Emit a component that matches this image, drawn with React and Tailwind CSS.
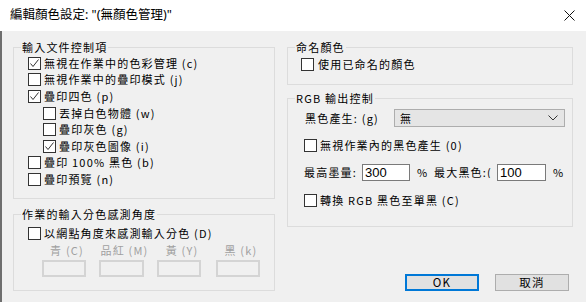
import React from "react";

function Box({ checked }) {
  return (
    <span className="w-[13px] h-[13px] shrink-0 border border-[#333333] bg-white flex items-center justify-center">
      {checked && (
        <svg width="11" height="11" viewBox="0 0 11 11">
          <polyline points="1.5,5.5 4,8.5 9.5,1.5" fill="none" stroke="#333333" strokeWidth="1" />
        </svg>
      )}
    </span>
  );
}

function CB({ checked, label, indent }) {
  return (
    <div className={indent ? "flex items-center h-[16.6px] pl-[15px]" : "flex items-center h-[16.6px]"}>
      <Box checked={checked} />
      <span className="ml-[3px] whitespace-nowrap">{label}</span>
    </div>
  );
}

function Group({ title, className, children }) {
  return (
    <div className={"relative border border-[#dcdcdc] " + className}>
      <span className="absolute left-[7px] top-[-9px] bg-[#f0f0f0] px-[1px] leading-[16px] whitespace-nowrap">
        {title}
      </span>
      {children}
    </div>
  );
}

export default function App() {
  return (
    <div className="w-[586px] h-[302px] flex flex-col font-['Noto_Sans_CJK_TC','Noto_Sans',sans-serif] text-black overflow-hidden">
      <div className="h-[31px] shrink-0 bg-white flex items-center justify-between pl-[10px] pr-[11px]">
        <span className="text-[12.5px] leading-none whitespace-nowrap font-['Noto_Sans','Noto_Sans_CJK_TC',sans-serif]">編輯顏色設定: "(無顏色管理)"</span>
        <svg width="11" height="11" viewBox="0 0 11 11">
          <path d="M0.5 0.5 L10.5 10.5 M10.5 0.5 L0.5 10.5" stroke="#111111" strokeWidth="1" />
        </svg>
      </div>
      <div className="flex-1 bg-[#f0f0f0] border-l-2 border-b-2 border-[#6e6e6e] flex gap-[12px] pl-[11px] pr-[12px] pt-[16px] pb-[11px] text-[11px] tracking-[1.2px] leading-none">
        <div className="w-[262px] flex flex-col">
          <Group title="輸入文件控制項" className="h-[152px] pt-[7px] pl-[14px]">
            <CB checked label="無視在作業中的色彩管理 (c)" />
            <CB label="無視作業中的疊印模式 (j)" />
            <CB checked label="疊印四色 (p)" />
            <CB indent label="丟掉白色物體 (w)" />
            <CB indent label="疊印灰色 (g)" />
            <CB indent checked label="疊印灰色圖像 (i)" />
            <CB label="疊印 100% 黑色 (b)" />
            <CB label="疊印預覽 (n)" />
          </Group>
          <Group title="作業的輸入分色感測角度" className="mt-[15px] h-[77px] pt-[10px] pl-[14px]">
            <div className="flex items-center h-[17px]">
              <Box />
              <span className="ml-[3px] whitespace-nowrap">以網點角度來感測輸入分色 (D)</span>
            </div>
            <div className="flex ml-[14px] mt-[1px] text-[#a0a0a0]">
              {[
                ["青 (C)", "w-[44px]"],
                ["品紅 (M)", "w-[45px] ml-[13px]"],
                ["黃 (Y)", "w-[44px] ml-[13px]"],
                ["黑 (k)", "w-[44px] ml-[15px]"],
              ].map(([t, c]) => (
                <div key={t} className={"flex flex-col items-center " + c}>
                  <span className="h-[14px] flex items-center whitespace-nowrap pl-[6px]">{t}</span>
                  <div className="mt-[3px] w-full h-[17px] border-2 border-[#d4d4d4] bg-[#f0f0f0]" />
                </div>
              ))}
            </div>
          </Group>
        </div>
        <div className="w-[286px] flex flex-col">
          <Group title="命名顏色" className="h-[38px] pt-[10px] pl-[13px]">
            <div className="flex items-center h-[13px]">
              <Box />
              <span className="ml-[4px] whitespace-nowrap">使用已命名的顏色</span>
            </div>
          </Group>
          <Group title="RGB 輸出控制" className="mt-[13px] h-[129px] pt-[10px] pl-[16px]">
            <div className="flex items-center h-[18px]">
              <span className="w-[90px] pl-[1px] whitespace-nowrap">黑色產生: (g)</span>
              <div className="w-[171px] h-[18px] bg-[#e5e5e5] border border-[#adadad] flex items-center justify-between pl-[5px] pr-[6px]">
                <span>無</span>
                <svg width="10" height="6" viewBox="0 0 10 6">
                  <polyline points="0.5,0.5 5,5 9.5,0.5" fill="none" stroke="#333333" strokeWidth="1" />
                </svg>
              </div>
            </div>
            <div className="flex items-center h-[13px] mt-[12px]">
              <Box />
              <span className="ml-[3px] whitespace-nowrap">無視作業內的黑色產生 (0)</span>
            </div>
            <div className="flex items-center h-[17px] mt-[12px]">
              <span className="w-[58px] whitespace-nowrap">最高墨量:</span>
              <div className="w-[48px] h-[17px] bg-white border border-[#7a7a7a] flex items-center pl-[2px] text-[13px] tracking-normal font-['Liberation_Sans',sans-serif]">300</div>
              <span className="ml-[7px] w-[17px]">%</span>
              <span className="w-[63px] overflow-hidden whitespace-nowrap">最大黑色:(</span>
              <div className="w-[49px] h-[17px] bg-white border border-[#7a7a7a] flex items-center pl-[2px] text-[13px] tracking-normal font-['Liberation_Sans',sans-serif]">100</div>
              <span className="ml-[7px]">%</span>
            </div>
            <div className="flex items-center h-[13px] mt-[13px]">
              <Box />
              <span className="ml-[3px] whitespace-nowrap">轉換 RGB 黑色至單黑 (C)</span>
            </div>
          </Group>
          <div className="mt-auto flex justify-end gap-[16px] pr-[4px]">
            <button className="w-[74px] h-[17px] bg-[#e1e1e1] border-2 border-[#0078d7] flex items-center justify-center text-[11.5px] leading-none">OK</button>
            <button className="w-[74px] h-[17px] bg-[#e1e1e1] border border-[#adadad] flex items-center justify-center text-[11.5px] leading-none">取消</button>
          </div>
        </div>
      </div>
    </div>
  );
}
